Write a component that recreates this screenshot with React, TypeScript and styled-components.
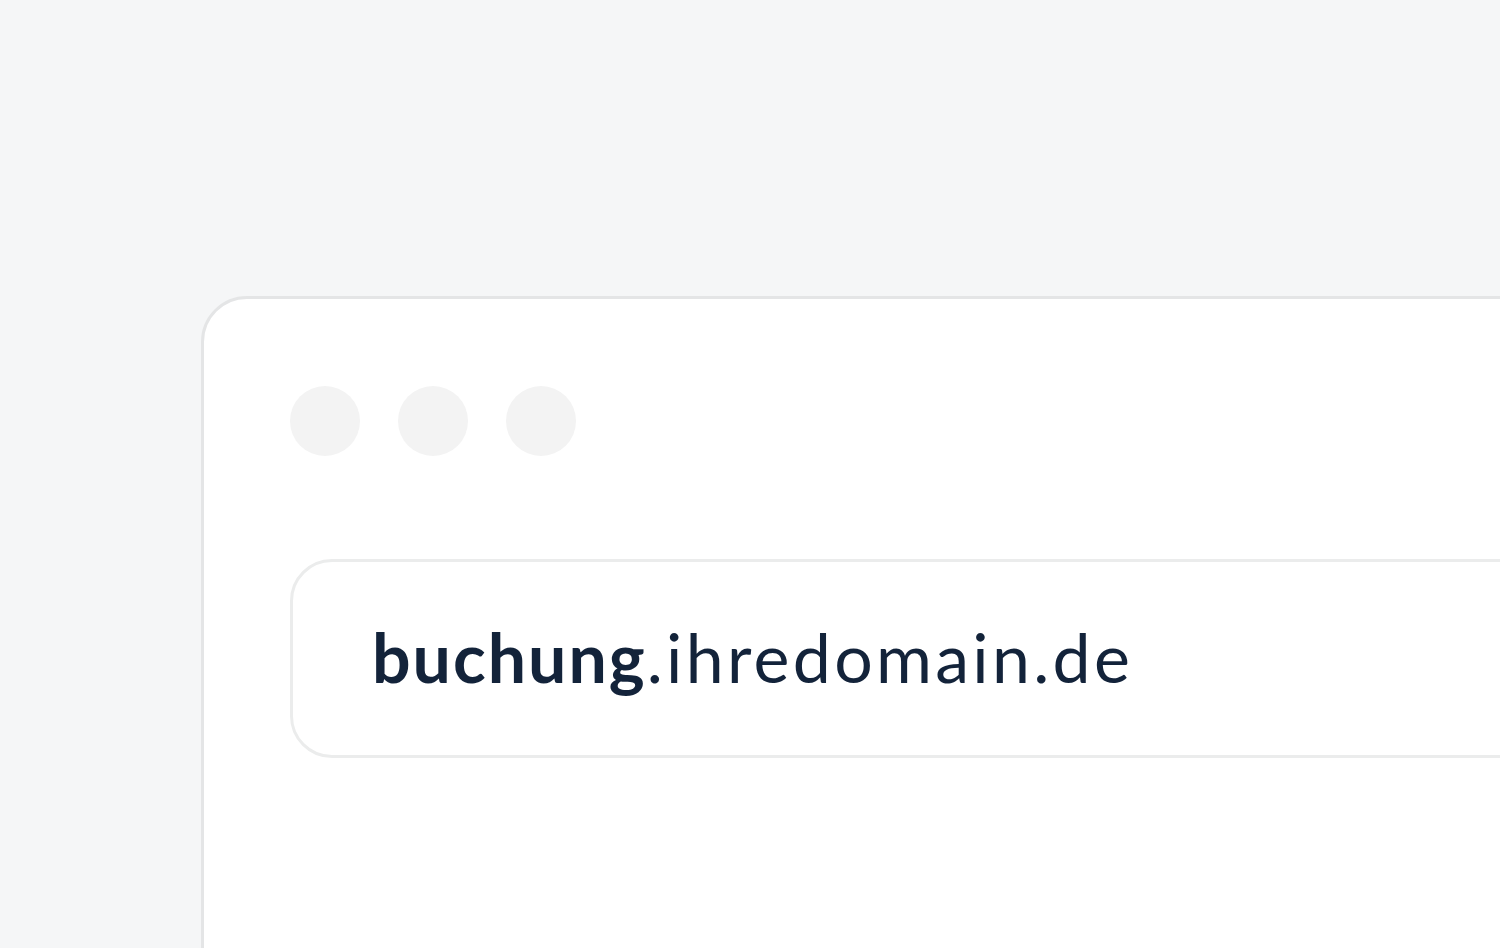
import React from "react";
import styled, { createGlobalStyle } from "styled-components";

const INK = "#13233a";

const GlobalStyle = createGlobalStyle`
	html, body {
		margin: 0;
		padding: 0;
		background: #f5f6f7;
		overflow: hidden;
	}
`;

const Page = styled.div`
	width: 1500px;
	height: 948px;
	padding: 296px 0 0 201px;
	box-sizing: border-box;
	overflow: hidden;
`;

const BrowserCard = styled.div`
	width: 1400px;
	height: 800px;
	background: #ffffff;
	border: 3px solid #e4e5e6;
	border-radius: 46px;
	padding: 87px 0 0 86px;
	box-sizing: border-box;
`;

const DotRow = styled.div`
	display: flex;
	gap: 38px;
`;

const Dot = styled.span`
	width: 70px;
	height: 70px;
	border-radius: 50%;
	background: #f3f3f3;
`;

const AddressBar = styled.div`
	margin-top: 103px;
	width: 1400px;
	height: 199px;
	border: 3px solid #ebecec;
	border-radius: 42px;
	box-sizing: border-box;
	display: flex;
	align-items: center;
	padding: 0 0 4px 79px;
`;

const Url = styled.div`
	font-family: Lato, "Noto Sans", sans-serif;
	font-size: 68px;
	letter-spacing: 3.3px;
	color: ${INK};
	font-weight: 400;
	white-space: nowrap;
`;

const Sub = styled.span`
	font-weight: 700;
	letter-spacing: 2px;
`;

export default function App() {
	return (
		<>
			<GlobalStyle />
			<Page>
				<BrowserCard>
					<DotRow>
						<Dot />
						<Dot />
						<Dot />
					</DotRow>
					<AddressBar>
						<Url>
							<Sub>buchung</Sub>.ihredomain.de
						</Url>
					</AddressBar>
				</BrowserCard>
			</Page>
		</>
	);
}
